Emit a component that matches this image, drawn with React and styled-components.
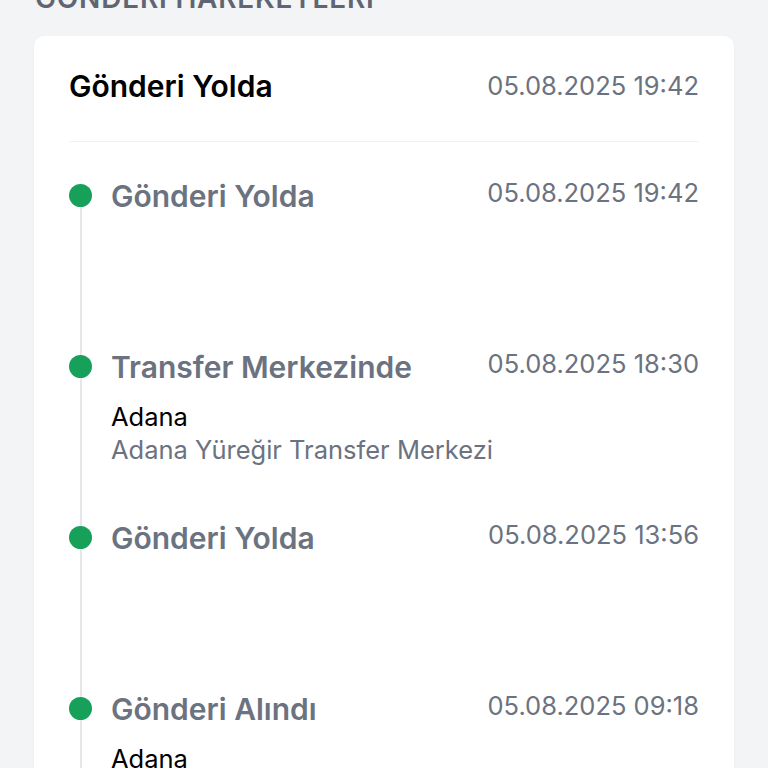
import React from 'react'
import styled, { createGlobalStyle } from 'styled-components'

const GlobalStyle = createGlobalStyle`
    body {
        margin:0;
        background:#f3f4f6;
        font-family:Inter, "Noto Sans", sans-serif;
    }
`

const events = [
    { title: 'Gönderi Yolda', date: '05.08.2025 19:42' },
    { title: 'Transfer Merkezinde', date: '05.08.2025 18:30', city: 'Adana', place: 'Adana Yüreğir Transfer Merkezi' },
    { title: 'Gönderi Yolda', date: '05.08.2025 13:56' },
    { title: 'Gönderi Alındı', date: '05.08.2025 09:18', city: 'Adana' },
]

function App() {
    return (
        <Page>
            <GlobalStyle />
            <Heading>GÖNDERİ HAREKETLERİ</Heading>
            <Card>
                <Header>
                    <HeaderTitle>Gönderi Yolda</HeaderTitle>
                    <Date>05.08.2025 19:42</Date>
                </Header>
                <Timeline>
                    {events.map((e, i) => (
                        <Item key={i}>
                            <Rail>
                                <Segment $off={i === 0} />
                                <Dot />
                                <Line />
                            </Rail>
                            <Content>
                                <Row>
                                    <Title>{e.title}</Title>
                                    <Date>{e.date}</Date>
                                </Row>
                                {e.city && <City>{e.city}</City>}
                                {e.place && <Place>{e.place}</Place>}
                            </Content>
                        </Item>
                    ))}
                </Timeline>
            </Card>
        </Page>
    )
}

export default App

const Page = styled.div`
    padding:0 34px 40px 34px;
    margin-top:-19px;
`

const Heading = styled.h2`
    margin:0 0 21px 1px;
    font-size:28px;
    line-height:34px;
    font-weight:600;
    letter-spacing:0.8px;
    color:#5f6672;
`

const Card = styled.div`
    background:#fff;
    border-radius:10px;
    box-shadow:0 1px 3px rgba(0,0,0,0.04);
    padding:32px 35px;
`

const Header = styled.div`
    display:flex;
    justify-content:space-between;
    align-items:center;
    padding-bottom:37px;
    border-bottom:1px solid #f0f1f3;
`

const HeaderTitle = styled.div`
    font-size:30px;
    line-height:36px;
    font-weight:600;
    color:#000;
`

const Date = styled.div`
    font-size:25.5px;
    line-height:30px;
    color:#6b7280;
    white-space:nowrap;
`

const Timeline = styled.div`
    padding-top:36px;
`

const Item = styled.div`
    display:flex;
    gap:19px;
    min-height:171px;
`

const Rail = styled.div`
    width:23px;
    display:flex;
    flex-direction:column;
    align-items:center;
`

const Segment = styled.div`
    width:2px;
    height:6px;
    flex-shrink:0;
    background:${p => (p.$off ? 'transparent' : '#e5e7eb')};
`

const Dot = styled.div`
    width:23px;
    height:23px;
    border-radius:50%;
    background:#16a05a;
    flex-shrink:0;
`

const Line = styled.div`
    width:2px;
    flex:1;
    background:#e5e7eb;
`

const Content = styled.div`
    flex:1;
    display:flex;
    flex-direction:column;
`

const Row = styled.div`
    display:flex;
    justify-content:space-between;
    align-items:flex-start;
`

const Title = styled.div`
    font-size:30px;
    line-height:36px;
    font-weight:600;
    color:#6b7280;
`

const City = styled.div`
    margin-top:15px;
    font-size:25.5px;
    line-height:33px;
    color:#000;
`

const Place = styled.div`
    font-size:25.5px;
    line-height:33px;
    color:#6b7280;
`
